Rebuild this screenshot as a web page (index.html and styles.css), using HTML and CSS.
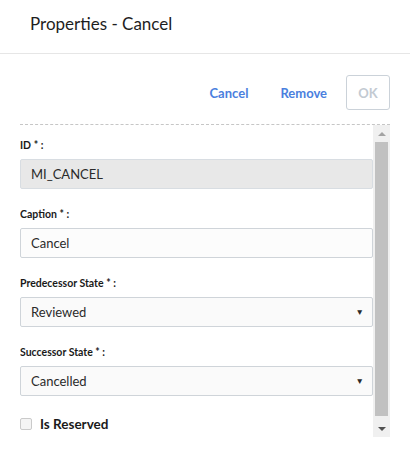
FILE: index.html
```html
<!DOCTYPE html>
<html>
<head>
<meta charset="utf-8">
<link rel="stylesheet" href="styles.css">
</head>
<body>
<div class="dialog">
  <div class="header"><h1 class="title">Properties - Cancel</h1></div>
  <div class="toolbar">
    <button class="btn-link">Cancel</button>
    <button class="btn-link">Remove</button>
    <button class="btn-ok" disabled>OK</button>
  </div>
  <div class="scroll-area">
    <div class="content">
      <div class="field">
        <div class="label">ID * :</div>
        <div class="input readonly">MI_CANCEL</div>
      </div>
      <div class="field">
        <div class="label">Caption * :</div>
        <div class="input">Cancel</div>
      </div>
      <div class="field">
        <div class="label">Predecessor State * :</div>
        <div class="input select"><span>Reviewed</span><span class="caret">&#9660;</span></div>
      </div>
      <div class="field">
        <div class="label">Successor State * :</div>
        <div class="input select"><span>Cancelled</span><span class="caret">&#9660;</span></div>
      </div>
      <div class="check-row">
        <span class="checkbox"></span>
        <span class="check-label">Is Reserved</span>
      </div>
    </div>
    <div class="scrollbar">
      <div class="sb-btn"><span class="arrow-up"></span></div>
      <div class="sb-thumb"></div>
      <div class="sb-rest"></div>
      <div class="sb-btn"><span class="arrow-down"></span></div>
    </div>
  </div>
</div>
</body>
</html>
```
FILE: styles.css
```css
* { box-sizing: border-box; }
html, body { margin: 0; padding: 0; background: #fff; }
body {
  font-family: "Lato", "Open Sans", sans-serif;
  color: #222;
  width: 410px;
  height: 468px;
  overflow: hidden;
}
.header {
  height: 54px;
  border-bottom: 1px solid #e6e6e6;
  padding-left: 30px;
  display: flex;
  align-items: flex-start;
}
.title {
  margin: 0;
  padding-top: 13px;
  font-size: 17px;
  line-height: 21px;
  font-weight: 400;
  color: #1e1e1e;
}
.toolbar {
  display: flex;
  justify-content: flex-end;
  align-items: center;
  padding: 21px 20px 14px 0;
}
.btn-link {
  background: none;
  border: none;
  font-family: inherit;
  font-size: 13px;
  font-weight: 700;
  color: #4b7fde;
  padding: 0 16px;
  height: 35px;
}
.btn-ok {
  margin-left: 3px;
  width: 44px;
  height: 35px;
  background: #fff;
  border: 1px solid #cbd2d9;
  border-radius: 3px;
  font-family: inherit;
  font-size: 13px;
  font-weight: 700;
  color: #c3cad2;
  padding: 0;
}
.scroll-area {
  margin: 0 20px;
  border-top: 1px dashed #c6c6c6;
  height: 313px;
  display: flex;
  overflow: hidden;
}
.content {
  flex: 1;
  padding-top: 13px;
}
.field { margin-bottom: 18px; }
.label {
  font-size: 10.5px;
  line-height: 14px;
  font-weight: 700;
  color: #1a1a1a;
  margin-bottom: 7px;
}
.input {
  height: 30px;
  border: 1px solid #cfd4d9;
  border-radius: 2px;
  background: #fcfcfc;
  padding: 0 10px;
  font-size: 13px;
  line-height: 28px;
  color: #2a2a2a;
  display: flex;
  align-items: center;
}
.input.readonly { background: #e8e8e8; border-color: #d8dde2; }
.input.select { justify-content: space-between; background: #fafafa; }
.caret { font-size: 8.5px; color: #2a2a2a; margin-right: -2px; }
.check-row {
  display: flex;
  align-items: center;
  margin-top: 20px;
}
.checkbox {
  width: 12px;
  height: 12px;
  border: 1px solid #cacaca;
  border-radius: 2px;
  background: #f4f4f4;
  margin-right: 8px;
}
.check-label {
  font-size: 13.5px;
  font-weight: 700;
  color: #1a1a1a;
}
.scrollbar {
  width: 17px;
  height: 312px;
  background: #f0f0f0;
  display: flex;
  flex-direction: column;
}
.sb-btn {
  height: 17px;
  display: flex;
  align-items: center;
  justify-content: center;
}
.sb-thumb {
  height: 274px;
  margin: 0 2px;
  background: #c1c1c1;
}
.sb-rest { flex: 1; }
.arrow-up {
  width: 0; height: 0;
  border-left: 4px solid transparent;
  border-right: 4px solid transparent;
  border-bottom: 4px solid #a3a3a3;
}
.arrow-down {
  width: 0; height: 0;
  border-left: 4px solid transparent;
  border-right: 4px solid transparent;
  border-top: 4px solid #505050;
}
```
